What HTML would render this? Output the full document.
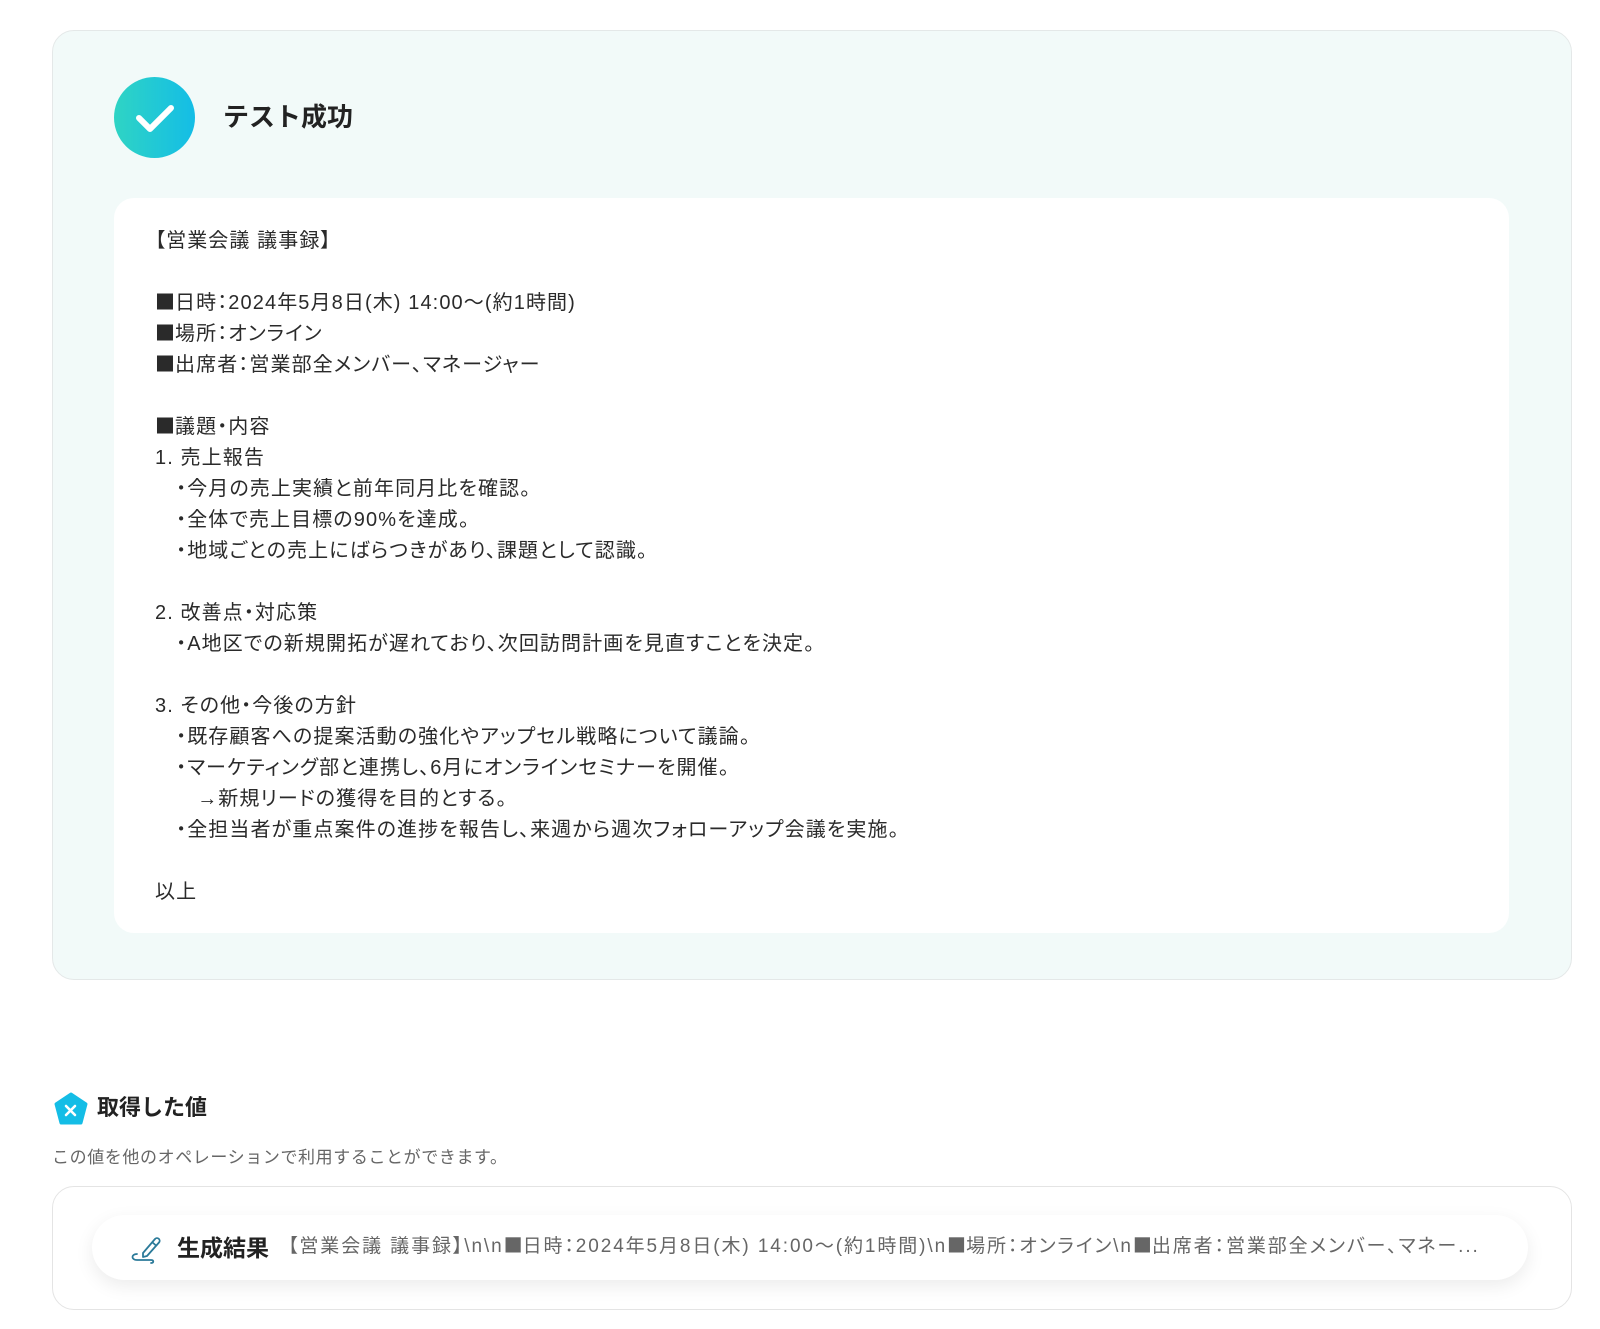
<!DOCTYPE html>
<html><head><meta charset="utf-8"><style>
*{margin:0;padding:0;box-sizing:border-box}
body{width:1600px;height:1329px;background:#fff;font-family:"Liberation Sans","Noto Sans CJK JP",sans-serif;color:#222;position:relative;overflow:hidden}
.card{position:absolute;left:52px;top:30px;width:1520px;height:950px;background:#f2faf9;border:1px solid #e4e8e8;border-radius:22px}
.check{position:absolute;left:114px;top:77px;width:81px;height:81px;border-radius:50%;background:linear-gradient(90deg,#2fd4c4,#14bde6)}
.title{position:absolute;left:223px;top:98px;font-size:26px;font-weight:bold;line-height:38px;color:#222}
.inner{position:absolute;left:114px;top:198px;width:1395px;height:735px;background:#fff;border-radius:20px}
.txt{position:absolute;left:155px;top:226px;font-size:20px;line-height:31px;white-space:pre;color:#2a2a2a;font-feature-settings:"palt";letter-spacing:1.1px}
.sq{font-family:"Noto Sans CJK JP",sans-serif;font-feature-settings:normal;line-height:0;letter-spacing:0}
.pent{position:absolute;left:54px;top:1092px}
.h2{position:absolute;left:97px;top:1093px;font-size:22px;font-weight:bold;line-height:30px}
.sub{position:absolute;left:52px;top:1147px;font-size:17px;color:#666;line-height:22px;letter-spacing:0.6px}
.card2{position:absolute;left:52px;top:1186px;width:1520px;height:124px;border:1px solid #e4e4e4;border-radius:22px;background:#fff}
.pill{position:absolute;left:92px;top:1215px;width:1436px;height:65px;border-radius:33px;background:#fff;box-shadow:0 6px 18px rgba(0,0,0,0.08)}
.pen{position:absolute;left:131px;top:1232px}
.lab{position:absolute;left:177px;top:1232px;font-size:23px;font-weight:bold;line-height:32px;color:#222}
.val{position:absolute;left:288px;top:1234px;font-size:19px;line-height:26px;color:#666;white-space:nowrap;font-feature-settings:"palt";letter-spacing:1.9px}
</style></head><body>
<div class="card">
</div>
<div class="check"><svg width="81" height="81" viewBox="0 0 81 81"><path d="M25 41 L36 52 L57 31" fill="none" stroke="#fff" stroke-width="6" stroke-linecap="round" stroke-linejoin="round"/></svg></div>
<div class="title">テスト成功</div>
<div class="inner"></div>
<div class="txt">【営業会議 議事録】

<span class="sq">■</span>日時：2024年5月8日(木) 14:00～(約1時間)
<span class="sq">■</span>場所：オンライン
<span class="sq">■</span>出席者：営業部全メンバー、マネージャー

<span class="sq">■</span>議題・内容
1. 売上報告
　・今月の売上実績と前年同月比を確認。
　・全体で売上目標の90%を達成。
　・地域ごとの売上にばらつきがあり、課題として認識。

2. 改善点・対応策
　・A地区での新規開拓が遅れており、次回訪問計画を見直すことを決定。

3. その他・今後の方針
　・既存顧客への提案活動の強化やアップセル戦略について議論。
　・マーケティング部と連携し、6月にオンラインセミナーを開催。
　　→新規リードの獲得を目的とする。
　・全担当者が重点案件の進捗を報告し、来週から週次フォローアップ会議を実施。

以上</div>
<svg class="pent" width="34" height="34" viewBox="0 0 34 34"><path d="M17 2 L32 12 L27 31 L7 31 L2 12 Z" fill="#14bde6" stroke="#14bde6" stroke-width="3" stroke-linejoin="round"/><path d="M12 14 L21 23 M21 14 L12 23" stroke="#fff" stroke-width="2.6" stroke-linecap="round"/></svg>
<div class="h2">取得した値</div>
<div class="sub">この値を他のオペレーションで利用することができます。</div>
<div class="card2"></div>
<div class="pill"></div>
<svg class="pen" width="30" height="32" viewBox="0 0 30 32"><path d="M12 21 L24 7 a2.5 2.5 0 0 1 4 3.5 L16 24 L12 25 Z M21 10 L25 13.5" fill="none" stroke="#2b7a99" stroke-width="1.8" stroke-linejoin="round"/><path d="M6 22 C0 22 0 28 6 28 L20 28 C23 28 23 31 20 31" fill="none" stroke="#2b7a99" stroke-width="1.8" stroke-linecap="round"/></svg>
<div class="lab">生成結果</div>
<div class="val">【営業会議 議事録】\n\n<span class="sq">■</span>日時：2024年5月8日(木) 14:00～(約1時間)\n<span class="sq">■</span>場所：オンライン\n<span class="sq">■</span>出席者：営業部全メンバー、マネー...</div>
</body></html>
